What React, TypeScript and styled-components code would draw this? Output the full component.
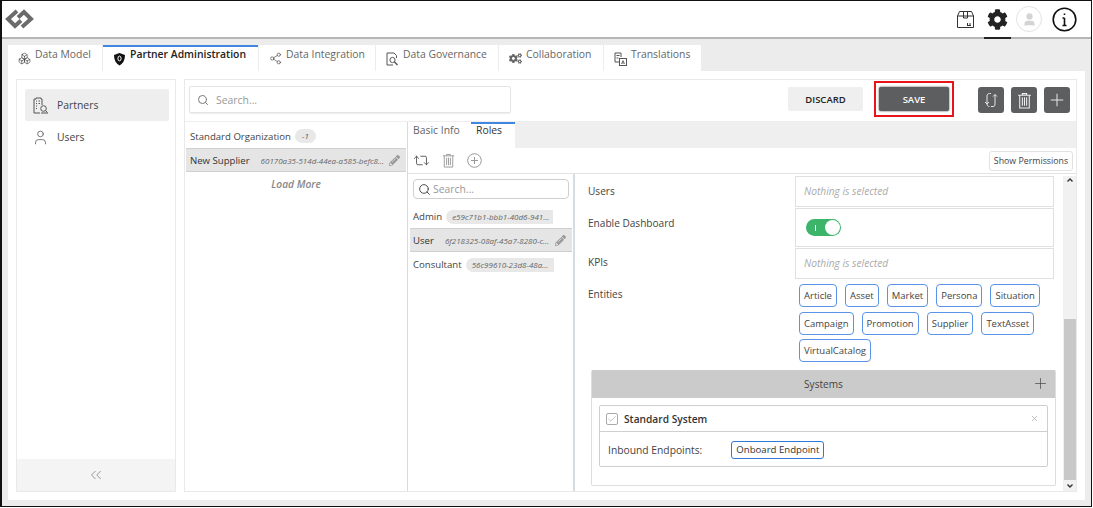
import React from 'react';
import styled, { createGlobalStyle } from 'styled-components';
import { Boxes, Share2, User, Repeat2, Plus, Search, ChevronsLeft, X, Check } from 'lucide-react';
import { FaCog, FaCogs, FaPencilAlt } from 'react-icons/fa';

const Global = createGlobalStyle`
    html, body { margin: 0; padding: 0; background: #fff; }
    #root { height: 508px; }
    * { box-sizing: border-box; }
    body { font-family: "Open Sans", "Liberation Sans", sans-serif; font-size: 10px; color: #444; }
`;

const Frame = styled.div`
    width: 1092px;
    height: 507px;
    border: 1px solid #111;
    border-left-width: 2px;
    background: #ececec;
    display: flex;
    flex-direction: column;
    overflow: hidden;
`;

const Header = styled.header`
    height: 38px;
    flex: none;
    background: #fff;
    border-bottom: 2px solid #b5b5b5;
    display: flex;
    align-items: center;
    justify-content: space-between;
    padding: 0 9px 0 2px;
`;

const HeaderIcons = styled.div`
    display: flex;
    align-items: center;
    height: 100%;
`;

const HeaderBtn = styled.div<{ $w: number; $active?: boolean }>`
    width: ${p => p.$w}px;
    height: 38px;
    margin-bottom: -2px;
    display: flex;
    align-items: center;
    justify-content: center;
    border-bottom: 2px solid ${p => (p.$active ? '#222' : 'transparent')};
`;

const Avatar = styled.div`
    width: 26px;
    height: 26px;
    border-radius: 50%;
    border: 1px solid #e2e2e2;
    display: flex;
    align-items: center;
    justify-content: center;
    color: #d4d4d4;
`;

const TabStrip = styled.nav`
    height: 32px;
    flex: none;
    padding: 6px 0 0 6px;
    display: flex;
    gap: 1px;
`;

const Tab = styled.div<{ $w: number; $active?: boolean }>`
    width: ${p => p.$w}px;
    height: 26px;
    background: #fff;
    display: flex;
    align-items: flex-start;
    gap: 4px;
    padding: ${p => (p.$active ? '0' : '2px')} 0 0 10px;
    border-top: ${p => (p.$active ? '2px solid #3f87e0' : 'none')};
    color: ${p => (p.$active ? '#222' : '#666')};
    font-weight: ${p => (p.$active ? 600 : 400)};
    font-size: 10.4px;
    line-height: 14px;
    white-space: nowrap;
    svg { margin-top: 5px; flex: none; }
`;

const Body = styled.div`
    width: 1077px;
    height: 429px;
    margin-left: 6px;
    flex: none;
    background: #fff;
    padding: 8px;
    display: flex;
    gap: 8px;
`;

const Sidebar = styled.aside`
    width: 160px;
    flex: none;
    border: 1px solid #e9e9e9;
    display: flex;
    flex-direction: column;
    padding-top: 9px;
`;

const SideItem = styled.div<{ $active?: boolean }>`
    height: 32px;
    margin: 0 6px 0 8px;
    display: flex;
    align-items: center;
    gap: 8px;
    padding-left: 7px;
    border-radius: 2px;
    background: ${p => (p.$active ? '#eeeeee' : 'transparent')};
    font-size: 10.4px;
    color: #444;
`;

const SideFoot = styled.div`
    margin-top: auto;
    height: 32px;
    background: #f4f4f4;
    display: flex;
    align-items: center;
    justify-content: center;
    color: #777;
`;

const Main = styled.main`
    flex: 1;
    min-width: 0;
    border: 1px solid #e9e9e9;
    display: flex;
    flex-direction: column;
`;

const Toolbar = styled.div`
    height: 41px;
    flex: none;
    display: flex;
    align-items: flex-start;
    padding: 6px 6px 0 4px;
`;

const SearchBox = styled.div`
    width: 322px;
    height: 27px;
    border: 1px solid #e4e4e4;
    border-radius: 2px;
    box-shadow: 0 1px 1px #eee;
    display: flex;
    align-items: center;
    gap: 7px;
    padding-left: 7px;
    color: #999;
    font-size: 10.4px;
`;

const Discard = styled.div`
    width: 75px;
    height: 24px;
    margin: 1px 11px 0 auto;
    background: #efefef;
    border-radius: 2px;
    display: flex;
    align-items: center;
    justify-content: center;
    color: #222;
    font-weight: 600;
    font-size: 9.5px;
`;

const SaveFrame = styled.div`
    width: 80px;
    height: 36px;
    margin: -5px 17px 0 0;
    border: 2px solid #e8141c;
    padding: 4px 3px;
`;

const Save = styled.div`
    height: 24px;
    background: #5d5e60;
    border-radius: 2px;
    box-shadow: 0 0 2px #333;
    display: flex;
    align-items: center;
    justify-content: center;
    color: #fff;
    font-weight: 600;
    font-size: 9.5px;
`;

const ToolIcon = styled.div`
    width: 26px;
    height: 26px;
    margin: 1px 0 0 7px;
    background: #5d5e60;
    border-radius: 3px;
    display: flex;
    align-items: center;
    justify-content: center;
    color: #e6e6e6;
`;

const Split = styled.div`
    flex: 1;
    min-height: 0;
    border-top: 1px solid #eee;
    display: flex;
`;

const PartnerList = styled.div`
    width: 223px;
    flex: none;
    border-right: 1px solid #d5dce4;
`;

const OrgRow = styled.div`
    height: 26px;
    display: flex;
    align-items: center;
    gap: 4px;
    padding: 2px 0 0 5px;
    color: #444;
    font-size: 9.6px;
`;

const Pill = styled.span`
    background: #e8e8e8;
    border-radius: 8px;
    padding: 0 7px;
    font-size: 8px;
    font-style: italic;
    line-height: 14px;
    color: #555;
`;

const SelectedRow = styled.div<{ $left: number }>`
    height: 24px;
    margin: 0 1px 0 ${p => p.$left}px;
    background: #e5e5e5;
    border-top: 1px solid #cfcfcf;
    border-bottom: 1px solid #cfcfcf;
    display: flex;
    align-items: center;
    padding: 0 6px 0 ${p => 5 - p.$left}px;
    font-size: 9.6px;
    color: #333;
    white-space: nowrap;
`;

const Guid = styled.span`
    flex: 1;
    min-width: 0;
    margin-left: 11px;
    font-size: 8px;
    font-style: italic;
    color: #666;
    white-space: nowrap;
    overflow: hidden;
`;

const LoadMore = styled.div`
    text-align: center;
    margin-top: 5px;
    font-size: 10.2px;
    font-style: italic;
    font-weight: 600;
    color: #888;
`;

const Detail = styled.div`
    flex: 1;
    min-width: 0;
    display: flex;
    flex-direction: column;
`;

const SubTabs = styled.div`
    height: 26px;
    flex: none;
    background: #efefef;
    display: flex;
`;

const SubTab = styled.div<{ $w: number; $active?: boolean }>`
    width: ${p => p.$w}px;
    background: #fff;
    padding-left: 5px;
    border-top: ${p => (p.$active ? '2px solid #3f87e0' : 'none')};
    line-height: ${p => (p.$active ? '13px' : '16px')};
    color: ${p => (p.$active ? '#333' : '#666')};
    font-size: 10.4px;
`;

const ActionRow = styled.div`
    height: 26px;
    flex: none;
    border-bottom: 1px solid #e2e2e2;
    display: flex;
    align-items: center;
    gap: 11px;
    padding: 0 3px 0 5px;
    color: #888;
`;

const ShowPerm = styled.div`
    margin-left: auto;
    height: 20px;
    width: 84px;
    border: 1px solid #e2e2e2;
    border-radius: 3px;
    display: flex;
    align-items: center;
    justify-content: center;
    color: #444;
    font-size: 8.8px;
    white-space: nowrap;
`;

const Columns = styled.div`
    flex: 1;
    min-height: 0;
    display: flex;
`;

const RoleList = styled.div`
    width: 167px;
    flex: none;
    border-right: 2px solid #d5dce4;
    padding-top: 5px;
`;

const RoleSearch = styled.div`
    width: 156px;
    height: 20px;
    margin: 0 0 5px 5px;
    border: 1px solid #cfcfcf;
    border-radius: 4px;
    display: flex;
    align-items: center;
    gap: 2px;
    padding-left: 4px;
    color: #999;
    font-size: 10.4px;
    svg { color: #333; }
`;

const RoleRow = styled.div`
    height: 24px;
    display: flex;
    align-items: center;
    padding: 1px 0 0 5px;
    gap: 4px;
    font-size: 9.6px;
    color: #444;
`;

const RoleGuid = styled.span<{ $w: number }>`
    width: ${p => p.$w}px;
    height: 14px;
    background: #e8e8e8;
    border-radius: 7px 0 0 7px;
    padding-left: 6px;
    font-size: 8px;
    line-height: 14px;
    font-style: italic;
    color: #666;
    white-space: nowrap;
    overflow: hidden;
`;

const FormArea = styled.div`
    flex: 1;
    min-width: 0;
    display: flex;
`;

const Form = styled.div`
    flex: 1;
    min-width: 0;
    padding: 2px 9px 0 13px;
    display: flex;
    flex-direction: column;
`;

const FormRow = styled.div`
    display: grid;
    grid-template-columns: 207px 259px;
    margin-bottom: 1px;
`;

const Label = styled.div<{ $top?: number }>`
    font-size: 10.1px;
    line-height: 14px;
    padding-top: ${p => p.$top ?? 7}px;
    color: #444;
`;

const Field = styled.div<{ $h: number }>`
    height: ${p => p.$h}px;
    border: 1px solid #e0e0e0;
    padding: 0 0 2px 8px;
    display: flex;
    align-items: center;
    font-size: 10.2px;
    font-style: italic;
    color: #aaa;
`;

const Toggle = styled.div`
    width: 35px;
    height: 17px;
    margin: 2px 0 0 2px;
    border-radius: 9px;
    background: #3cb46a;
    display: flex;
    align-items: center;
    justify-content: space-between;
    padding: 0 1px 0 9px;
    &::before { content: ''; width: 1px; height: 6px; background: #fff; }
    &::after { content: ''; width: 15px; height: 15px; border-radius: 50%; background: #fff; }
`;

const Chips = styled.div`
    display: flex;
    flex-wrap: wrap;
    gap: 4.500px 8px;
    padding: 4px 8px 0 4px;
`;

const Chip = styled.span`
    height: 23px;
    border: 1px solid #5a94e8;
    border-radius: 4px;
    padding: 0 4px;
    display: inline-flex;
    align-items: center;
    font-size: 9.5px;
    color: #444;
    white-space: nowrap;
`;

const Systems = styled.section`
    width: 465px;
    height: 116px;
    flex: none;
    margin: 7px 0 0 3px;
    border: 1px solid #ddd;
    border-top: none;
    border-radius: 2px;
`;

const SystemsHead = styled.div`
    height: 28px;
    background: #cbcbcb;
    display: flex;
    align-items: center;
    justify-content: center;
    position: relative;
    color: #444;
    font-size: 10.1px;
    svg { position: absolute; right: 6px; top: 5px; color: #444; }
`;

const SysCard = styled.div`
    margin: 7px 7px 0;
    height: 62px;
    border: 1px solid #cfcfcf;
    border-radius: 2px;
`;

const SysTitle = styled.div`
    height: 26px;
    border-bottom: 1px solid #cfcfcf;
    display: flex;
    align-items: center;
    gap: 6px;
    padding: 0 8px 0 6px;
    font-size: 10.2px;
    font-weight: 600;
    color: #333;
    svg:last-child { margin-left: auto; color: #aaa; }
`;

const CheckBox = styled.div`
    width: 12px;
    height: 12px;
    border: 1px solid #aaa;
    border-radius: 2px;
    display: flex;
    align-items: center;
    justify-content: center;
    color: #777;
    svg { flex: none; margin: 0; color: #777; }
`;

const SysBody = styled.div`
    display: flex;
    align-items: center;
    height: 35px;
    padding-left: 8px;
    font-size: 10.3px;
    color: #444;
`;

const EndpointChip = styled.span`
    margin-left: 29px;
    height: 18px;
    border: 1px solid #2f78dc;
    border-radius: 3px;
    padding: 0 4px;
    display: inline-flex;
    align-items: center;
    font-size: 9.6px;
    color: #333;
`;

const Scrollbar = styled.div`
    width: 13px;
    flex: none;
    margin: 2px 0 0;
    background: #f1f1f1;
    display: flex;
    flex-direction: column;
    align-items: center;
    padding-bottom: 1px;
`;

const Thumb = styled.div`
    width: 12px;
    height: 161px;
    margin: auto 0 2px;
    background: #c8c8c8;
`;

const Logo = () => (
    <svg width="30" height="22" viewBox="0 0 30 22" fill="none" stroke="#6b6b6b" strokeWidth="4">
        <path d="M13 3 L4 11 L11 18 L17 12.500" />
        <path d="M18 19 L27 11 L20 4 L14 9.500" />
    </svg>
);

const ShieldIcon = () => (
    <svg width="13" height="14" viewBox="0 0 13 14">
        <path d="M6.500 1 L12 3 C12 8 10 11.500 6.500 13.500 C3 11.500 1 8 1 3 Z" fill="#111" />
        <ellipse cx="6.500" cy="6.500" rx="1.600" ry="2.400" fill="none" stroke="#fff" strokeWidth="1" />
    </svg>
);

const PartnersIcon = () => (
    <svg width="17" height="17" viewBox="0 0 17 17" fill="none" stroke="#555" strokeWidth="1">
        <path d="M2 16 V2 H4 V1 H9 V2 H10 V8 M2 16 H8" />
        <path d="M4 4 H5 M6.500 4 H8 M4 6.500 H5 M6.500 6.500 H8 M4 9 H5 M4 11.500 H5" />
        <circle cx="11.500" cy="11.500" r="2.800" />
        <path d="M9 16 H16 M13.500 13.500 L15.500 15.500" />
    </svg>
);

const PackageIcon = () => (
    <svg width="19" height="19" viewBox="0 0 19 19" fill="none" stroke="#333" strokeWidth="1">
        <path d="M1.500 6 L3.500 1.500 H15.500 L17.500 6 V17.500 H1.500 Z M1.500 6 H17.500" />
        <path d="M7.500 1.500 V6 M11.500 1.500 V6 M7.500 6 V8 H11.500 V6" />
        <path d="M11.500 15 V13 M14 15 V13 M11 15.500 H15" />
    </svg>
);

const GovernanceIcon = () => (
    <svg width="13" height="14" viewBox="0 0 13 14" fill="none" stroke="#555" strokeWidth="1">
        <path d="M7 13 H1 V1 H8 L10.500 3.500 V6" />
        <circle cx="6.500" cy="8" r="2.600" />
        <path d="M8.500 10 L11.500 13" strokeWidth="1.400" />
    </svg>
);

const TranslateIcon = () => (
    <svg width="13" height="14" viewBox="0 0 13 14" fill="none" stroke="#555" strokeWidth="1">
        <path d="M5 10 H1 V1 H7 V5" />
        <path d="M2.500 3.500 H5.500 M2.500 6 H4.500" />
        <rect x="5.500" y="6.500" width="7" height="7" fill="#fff" />
        <path d="M7.500 12 L9 8.500 L10.500 12 M8 11 H10" strokeWidth="0.800" />
    </svg>
);

const SyncIcon = () => (
    <svg width="16" height="16" viewBox="0 0 16 16" fill="none" stroke="currentColor" strokeWidth="1">
        <path d="M8 1.500 H6.500 C5 1.500 4 2.500 4 4 V12 C4 13.500 5 14.500 6.500 14.500 M2 10 L4 12 L6 10" />
        <path d="M8 14.500 H10 C11.500 14.500 12 13.500 12 12 V2.500 M10 4.500 L12 2.500 L14 4.500" />
    </svg>
);

const TrashIcon = ({ size, color }: { size: number; color: string }) => (
    <svg width={size} height={size} viewBox="0 0 16 16" fill="none" stroke={color} strokeWidth="1">
        <path d="M2 3 H14 M6 3 V1.500 H10 V3" />
        <path d="M3.500 3 V15 H12.500 V3" />
        <path d="M6 5 V13 M8 5 V13 M10 5 V13" />
    </svg>
);

const App: React.FC = () => {
    const entities = ['Article', 'Asset', 'Market', 'Persona', 'Situation', 'Campaign', 'Promotion', 'Supplier', 'TextAsset', 'VirtualCatalog'];

    return (
        <Frame>
            <Global />
            <Header>
                <Logo />
                <HeaderIcons>
                    <HeaderBtn $w={38}><PackageIcon /></HeaderBtn>
                    <HeaderBtn $w={27} $active><FaCog size={21} color="#222" /></HeaderBtn>
                    <HeaderBtn $w={36}>
                        <Avatar><User size={15} fill="#d4d4d4" /></Avatar>
                    </HeaderBtn>
                    <HeaderBtn $w={35}>
                        <svg width="25" height="25" viewBox="0 0 25 25" fill="none" stroke="#111">
                            <circle cx="12.500" cy="12.500" r="11.300" strokeWidth="1.600" />
                            <path d="M12.500 11 V18.500 M10.500 11 H12.500 M10.500 18.500 H14.500 M12.500 6.500 V8" strokeWidth="1.600" />
                        </svg>
                    </HeaderBtn>
                </HeaderIcons>
            </Header>
            <TabStrip>
                <Tab $w={94}><Boxes size={13} strokeWidth={1.2} color="#444" />Data Model</Tab>
                <Tab $w={155} $active><ShieldIcon />Partner Administration</Tab>
                <Tab $w={116}><Share2 size={13} strokeWidth={1.2} color="#444" />Data Integration</Tab>
                <Tab $w={122}><GovernanceIcon />Data Governance</Tab>
                <Tab $w={104}><FaCogs size={13} color="#666" />Collaboration</Tab>
                <Tab $w={97}><TranslateIcon />Translations</Tab>
            </TabStrip>
            <Body>
                <Sidebar>
                    <SideItem $active><PartnersIcon />Partners</SideItem>
                    <SideItem><User size={17} strokeWidth={1} />Users</SideItem>
                    <SideFoot><ChevronsLeft size={18} strokeWidth={1} /></SideFoot>
                </Sidebar>
                <Main>
                    <Toolbar>
                        <SearchBox><Search size={12} color="#777" />Search...</SearchBox>
                        <Discard>DISCARD</Discard>
                        <SaveFrame><Save>SAVE</Save></SaveFrame>
                        <ToolIcon><SyncIcon /></ToolIcon>
                        <ToolIcon><TrashIcon size={17} color="#eee" /></ToolIcon>
                        <ToolIcon><Plus size={20} strokeWidth={1.2} /></ToolIcon>
                    </Toolbar>
                    <Split>
                        <PartnerList>
                            <OrgRow>Standard Organization <Pill>-1</Pill></OrgRow>
                            <SelectedRow $left={1}>
                                New Supplier
                                <Guid>60170a35-514d-44ea-a585-befc8...</Guid>
                                <FaPencilAlt size={11} color="#999" />
                            </SelectedRow>
                            <LoadMore>Load More</LoadMore>
                        </PartnerList>
                        <Detail>
                            <SubTabs>
                                <SubTab $w={63}>Basic Info</SubTab>
                                <SubTab $w={44} $active>Roles</SubTab>
                            </SubTabs>
                            <ActionRow>
                                <Repeat2 size={17} strokeWidth={1.3} color="#555" />
                                <TrashIcon size={15} color="#999" />
                                <svg width="15" height="15" viewBox="0 0 15 15" fill="none" stroke="#999">
                                    <circle cx="7.500" cy="7.500" r="6.800" />
                                    <path d="M7.500 4 V11 M4 7.500 H11" />
                                </svg>
                                <ShowPerm>Show Permissions</ShowPerm>
                            </ActionRow>
                            <Columns>
                                <RoleList>
                                    <RoleSearch><Search size={13} strokeWidth={1.6} />Search...</RoleSearch>
                                    <RoleRow>Admin <RoleGuid $w={107}>e59c71b1-bbb1-40d6-941...</RoleGuid></RoleRow>
                                    <SelectedRow $left={2}>
                                        User
                                        <Guid>6f218325-08af-45a7-8280-c...</Guid>
                                        <FaPencilAlt size={11} color="#999" />
                                    </SelectedRow>
                                    <RoleRow>Consultant <RoleGuid $w={88}>56c99610-23d8-48a...</RoleGuid></RoleRow>
                                </RoleList>
                                <FormArea>
                                    <Form>
                                        <FormRow><Label $top={8}>Users</Label><Field $h={31}>Nothing is selected</Field></FormRow>
                                        <FormRow><Label $top={8}>Enable Dashboard</Label><Field $h={39}><Toggle /></Field></FormRow>
                                        <FormRow><Label>KPIs</Label><Field $h={31}>Nothing is selected</Field></FormRow>
                                        <FormRow>
                                            <Label>Entities</Label>
                                            <Chips>{entities.map(e => <Chip key={e}>{e}</Chip>)}</Chips>
                                        </FormRow>
                                        <Systems>
                                            <SystemsHead>Systems<Plus size={17} strokeWidth={1} /></SystemsHead>
                                            <SysCard>
                                                <SysTitle>
                                                    <CheckBox><Check size={10} strokeWidth={1.8} /></CheckBox>
                                                    Standard System
                                                    <X size={9} />
                                                </SysTitle>
                                                <SysBody>Inbound Endpoints:<EndpointChip>Onboard Endpoint</EndpointChip></SysBody>
                                            </SysCard>
                                        </Systems>
                                    </Form>
                                    <Scrollbar>
                                        <svg width="8" height="8" viewBox="0 0 8 8" fill="none" stroke="#333" strokeWidth="1.400"><path d="M1.500 5.500 L4 3 L6.500 5.500" /></svg>
                                        <Thumb />
                                        <svg width="8" height="8" viewBox="0 0 8 8" fill="none" stroke="#333" strokeWidth="1.400"><path d="M1.500 2.500 L4 5 L6.500 2.500" /></svg>
                                    </Scrollbar>
                                </FormArea>
                            </Columns>
                        </Detail>
                    </Split>
                </Main>
            </Body>
        </Frame>
    );
};

export default App;
